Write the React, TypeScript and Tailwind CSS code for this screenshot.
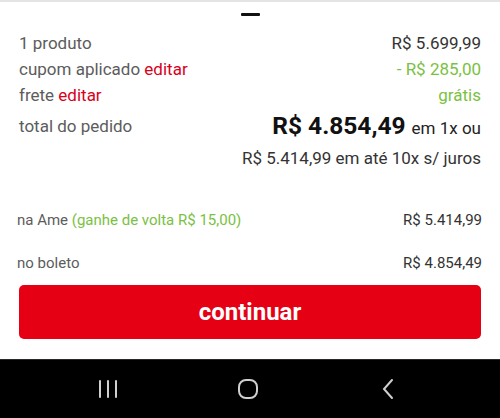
export default function App() {
  return (
    <div className="w-[500px] h-[418px] flex flex-col bg-white font-['Roboto',sans-serif] overflow-hidden">
      <div className="h-[2px] bg-[#e4e4e4]" />
      <div className="flex justify-center pt-[11px]">
        <div className="w-[19px] h-[3px] bg-[#111] rounded-[1px]" />
      </div>

      <div className="px-[19px] pt-[14px] text-[17px] leading-[26px]">
        <div className="flex justify-between">
          <span className="text-[#5c5c5c]">1 produto</span>
          <span className="text-[#333]">R$ 5.699,99</span>
        </div>
        <div className="flex justify-between">
          <span className="text-[#5c5c5c]">
            cupom aplicado <span className="text-[#d9001b]">editar</span>
          </span>
          <span className="text-[#7ac143]">- R$ 285,00</span>
        </div>
        <div className="flex justify-between">
          <span className="text-[#5c5c5c]">
            frete <span className="text-[#d9001b]">editar</span>
          </span>
          <span className="text-[#7ac143]">grátis</span>
        </div>
        <div className="flex justify-between items-start mt-[5px]">
          <span className="text-[#5c5c5c]">total do pedido</span>
          <div className="flex flex-col items-end">
            <div className="flex items-baseline gap-[6px] -mt-[2px]">
              <span className="text-[24.5px] font-bold text-[#111] leading-[30px]">R$ 4.854,49</span>
              <span className="text-[#222]">em 1x ou</span>
            </div>
            <span className="text-[#333] mt-[4px]">R$ 5.414,99 em até 10x s/ juros</span>
          </div>
        </div>
      </div>

      <div className="pl-[17px] pr-[18px] pt-[37px] text-[15px]">
        <div className="flex justify-between h-[24px] items-center">
          <span className="text-[#5c5c5c]">
            na Ame <span className="text-[#7ac143]">(ganhe de volta R$ 15,00)</span>
          </span>
          <span className="text-[#333]">R$ 5.414,99</span>
        </div>
        <div className="flex justify-between h-[24px] items-center mt-[19px]">
          <span className="text-[#5c5c5c]">no boleto</span>
          <span className="text-[#333]">R$ 4.854,49</span>
        </div>
      </div>

      <div className="px-[19px] pt-[10px]">
        <button className="w-full h-[54px] rounded-[5px] bg-[#e60014] text-white text-[24px] font-bold">
          continuar
        </button>
      </div>

      <div className="mt-auto h-[59px] bg-black border-t border-[#2a2a2a] flex items-center justify-between pl-[97px] pr-[101px]">
        <svg width="22" height="22" viewBox="0 0 22 22">
          <rect x="2" y="2" width="2" height="18" rx="1" fill="#cfcfcf" />
          <rect x="10" y="2" width="2" height="18" rx="1" fill="#cfcfcf" />
          <rect x="18" y="2" width="2" height="18" rx="1" fill="#cfcfcf" />
        </svg>
        <svg width="22" height="22" viewBox="0 0 22 22">
          <rect x="2" y="2" width="18" height="18" rx="7" fill="none" stroke="#cfcfcf" strokeWidth="2" />
        </svg>
        <svg width="22" height="22" viewBox="0 0 22 22">
          <path d="M15 2 L7 11 L15 20" fill="none" stroke="#cfcfcf" strokeWidth="2" strokeLinecap="round" />
        </svg>
      </div>
    </div>
  )
}
